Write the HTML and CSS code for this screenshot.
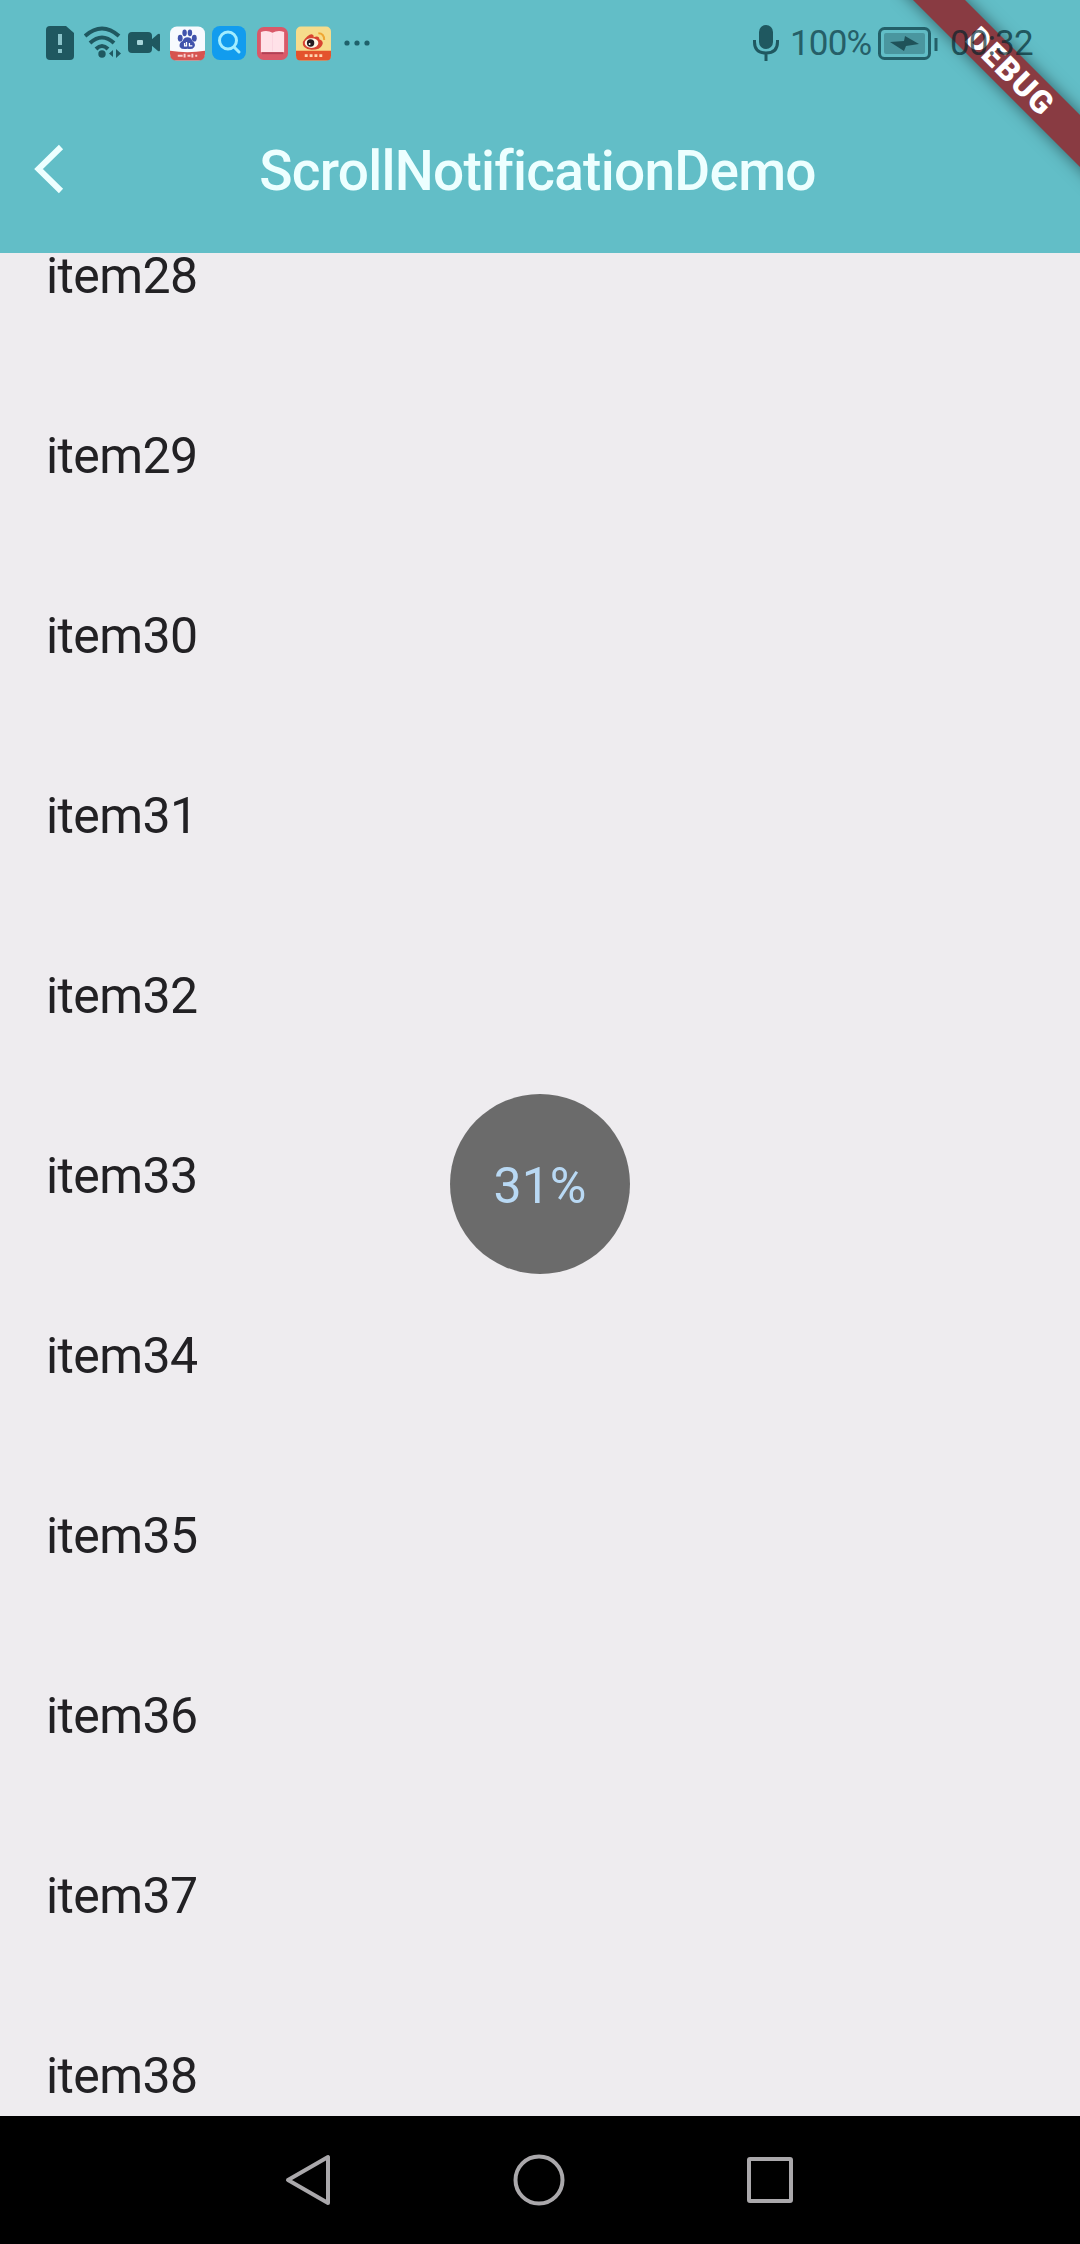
FILE: index.html
```html
<!DOCTYPE html>
<html lang="en">
<head>
<meta charset="utf-8">
<title>ScrollNotificationDemo</title>
<link rel="stylesheet" href="styles.css">
</head>
<body>
<div class="screen">
  <header class="header">
    <div class="status">
      <div class="status-icons">
        <svg class="sim" width="28" height="34" viewBox="0 0 28 34"><path fill="#1f5860" d="M4 0h16l8 7v23q0 4-4 4H4q-4 0-4-4V4q0-4 4-4z"/><path stroke="#8ac3c9" stroke-width="4" d="M14 8v11M14 23v4"/></svg>
        <svg class="wifi" width="38" height="34" viewBox="0 0 38 34"><g fill="none" stroke="#1f5860" stroke-width="4"><path d="M1 10q17-15 34 0"/><path d="M6 17q12-11 24 0"/><path d="M12 23q6-6 12 0"/></g><circle cx="18" cy="28" r="3.7" fill="#1f5860"/><path fill="#1f5860" d="M29 24v7l-4-3.500zM32 23l5 4.500-5 4.500z"/></svg>
        <svg class="camera" width="33" height="22" viewBox="0 0 33 22"><rect width="24" height="21" rx="4" fill="#1f5860"/><path fill="#1f5860" d="M23 8l7-6q2-1 2 1v15q0 2-2 1l-7-6z"/><rect x="9" y="8" width="6" height="5" rx="1" fill="#a7d4d9"/></svg>
        <svg class="baidu" width="35" height="35" viewBox="0 0 36 35"><rect width="36" height="35" rx="7" fill="#f7fafe"/><g fill="#4053ac"><ellipse cx="10.500" cy="12" rx="2.500" ry="3.500"/><ellipse cx="15" cy="6.500" rx="2.300" ry="3.500"/><ellipse cx="20.500" cy="6.500" rx="2.300" ry="3.500"/><ellipse cx="25" cy="12" rx="2.500" ry="3.500"/><path d="M18 11q4 0 5 4 4 3 2 6-2 3-7 2-6 1-8-2-1-4 3-6 1-4 5-4z"/></g><path d="M15 17v3h2v-4M20 17v3h3" fill="none" stroke="#fff" stroke-width="1.300"/><path d="M0 25q18 3 36 0v3q0 7-7 7H7q-7 0-7-7z" fill="#d65350"/><path d="M8 30h5M15 28v4M18 30h3M23 28v4M26 30h2" stroke="#f8d0d0" stroke-width="2"/></svg>
        <svg class="search" width="34" height="34" viewBox="0 0 34 34"><rect width="34" height="34" rx="8" fill="#129cee"/><circle cx="16" cy="14.500" r="8.500" fill="none" stroke="#a2edff" stroke-width="3"/><path d="M22 21l5 5" stroke="#a2edff" stroke-width="3" stroke-linecap="round"/></svg>
        <svg class="book" width="31" height="33" viewBox="0 0 32 34"><rect width="32" height="34" rx="7" fill="#d95969"/><path fill="#ffe1e8" d="M4 5q7-2 12 1 5-3 12-1v21H4z"/><path d="M5 27h22" stroke="#b34055" stroke-width="2"/><path d="M16 7v18" stroke="#fbd5df"/></svg>
        <svg class="weibo" width="35" height="35" viewBox="0 0 36 35"><rect width="36" height="35" rx="5" fill="#f6dc8c"/><path fill="#d84431" d="M7 16q5-8 9-8 3 1 2 3 6-2 6 2 5 2 3 6-2 5-11 5-10-1-9-8z"/><ellipse cx="16" cy="17" rx="7" ry="5" fill="#fff7e4"/><circle cx="15" cy="17" r="3.800" fill="#251c20"/><circle cx="14" cy="18" r="1" fill="#fff"/><path d="M23 7q6 0 6 7" fill="none" stroke="#efa632" stroke-width="2"/><path fill="#e4532d" d="M0 25h36v5q0 5-5 5H5q-5 0-5-5z"/><path d="M9 30h3M14 30h3M19 30h3M24 30h3" stroke="#ffd6b0" stroke-width="3"/></svg>
        <svg class="more" width="28" height="8" viewBox="0 0 28 8"><g fill="#1f606a"><circle cx="3" cy="4" r="2.600"/><circle cx="13" cy="4" r="2.600"/><circle cx="23" cy="4" r="2.600"/></g></svg>
      </div>
      <div class="status-info">
        <svg class="mic" width="26" height="36" viewBox="0 0 26 36"><rect x="6" y="0" width="14" height="24" rx="7" fill="#1f5860"/><path d="M1.500 15v2q0 11 11.500 11t11.500-11v-2M13 28v8" fill="none" stroke="#1f5860" stroke-width="3"/></svg>
        <span class="charge">100%</span>
        <svg class="battery" width="60" height="33" viewBox="0 0 60 33"><rect x="1.500" y="1.500" width="50" height="30" rx="5" fill="none" stroke="#235f68" stroke-width="3"/><rect x="6" y="6" width="41" height="21" rx="2" fill="#4a969f"/><path d="M12 15l14-1 1-5 14 8-13 2-2 5z" fill="#1f5259"/><path d="M58 11v13" stroke="#235f68" stroke-width="3"/></svg>
        <span class="clock">00:32</span>
      </div>
    </div>
    <div class="toolbar">
      <svg class="back" width="32" height="50" viewBox="0 0 32 50"><path d="M27 3L4.500 25 27 47" fill="none" stroke="#edffff" stroke-width="6"/></svg>
      <h1 class="title">ScrollNotificationDemo</h1>
    </div>
    <svg class="banner" width="190" height="240" viewBox="0 0 190 240"><path class="ribbon" d="M50 -25L265 190V242L-2 -25z"/><text x="0" y="11" text-anchor="middle" textLength="108" transform="translate(120 71) rotate(45)">DEBUG</text></svg>
  </header>
  <main class="content">
    <ul class="list">
      <li>item28</li><li>item29</li><li>item30</li><li>item31</li><li>item32</li><li>item33</li><li>item34</li><li>item35</li><li>item36</li><li>item37</li><li>item38</li>
    </ul>
    <div class="progress">31%</div>
  </main>
  <nav class="nav">
    <svg width="50" height="54" viewBox="0 0 50 54"><path d="M45 4v46L5 27z"/></svg>
    <svg width="54" height="54" viewBox="0 0 54 54"><circle cx="27" cy="27" r="23.500"/></svg>
    <svg width="50" height="54" viewBox="0 0 50 54"><rect x="4" y="6" width="42" height="42" rx="1"/></svg>
  </nav>
</div>
</body>
</html>
```
FILE: styles.css
```css
* { box-sizing: border-box; }
body { margin: 0; font-family: Roboto, "Noto Sans", sans-serif; }
.screen { width: 1080px; height: 2244px; display: flex; flex-direction: column; overflow: hidden; background: #eeecef; }
.header { position: relative; height: 253px; flex: none; background: #62bec7; overflow: hidden; }
.status { position: relative; z-index: 2; height: 86px; padding: 0 46px; display: flex; justify-content: space-between; align-items: center; }
.status-icons, .status-info { display: flex; align-items: center; }
.wifi { margin-left: 10px; }
.camera { margin-left: 6px; }
.baidu { margin-left: 9px; }
.search { margin-left: 7px; }
.book { margin-left: 11px; }
.weibo { margin-left: 8px; }
.more { margin-left: 13px; }
.status-info { color: #265f68; font-size: 35px; line-height: 44px; }
.charge { width: 81px; margin: 2px 0 0 11px; letter-spacing: -.8px; white-space: nowrap; }
.battery { margin-left: 7px; }
.clock { margin: 2px 0 0 12px; width: 84px; color: rgba(0, 35, 42, .68); letter-spacing: -.9px; white-space: nowrap; }
.toolbar { height: 167px; padding: 0 34px; display: grid; grid-template-columns: 100px 1fr 100px; align-items: center; }
.back { margin-bottom: 2px; }
.title { margin: 2px 5px 0 0; font-size: 55px; line-height: 70px; font-weight: 500; letter-spacing: -.75px; white-space: nowrap; color: #edffff; text-align: center; }
.banner { position: absolute; z-index: 1; top: 0; right: 0; }
.ribbon { fill: #893b42; filter: drop-shadow(0 0 8px rgba(0, 0, 0, .5)); }
.banner text { font-size: 32px; font-weight: 900; fill: #fff; }
.content { position: relative; flex: 1; min-height: 0; overflow: hidden; }
.list { list-style: none; margin: -67px 0 0; padding: 0; }
.list li { height: 180px; padding-left: 46px; display: flex; align-items: center; font-size: 50px; letter-spacing: -.6px; color: #222124; }
.progress { position: absolute; left: 450px; top: 841px; width: 180px; height: 180px; border-radius: 50%; background: #6b6b6b; color: #b9d9f4; display: flex; align-items: center; justify-content: center; padding-top: 3px; font-size: 50px; }
.nav { height: 128px; flex: none; background: #000; display: flex; justify-content: space-between; align-items: center; padding: 0 285px 0 283px; }
.nav svg { fill: none; stroke: #aaa8ab; stroke-width: 4; stroke-linejoin: round; }
```
